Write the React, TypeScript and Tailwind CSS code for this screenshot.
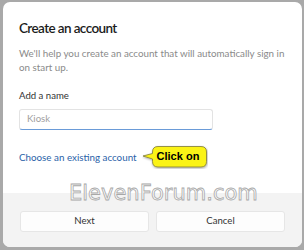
import React from "react";

export default function App() {
  return (
    <div className="w-[304px] h-[250px] bg-[#a9a9a9] pt-[2px] pr-[2px] pb-[3px] pl-[3px] overflow-hidden" style={{ fontFamily: 'Lato, "Open Sans", sans-serif' }}>
      <div className="relative flex h-full flex-col overflow-hidden rounded-[7px] bg-white">
        <div className="flex h-[191px] flex-col px-[16px] pt-[16px]">
          <div className="text-[13.5px] leading-[20px] font-semibold tracking-[-0.6px] text-[#1b1b1b]">Create an account</div>
          <div className="mt-[9px] w-[272px] text-[9.8px] leading-[13.5px] text-[#8a8a8a]">
            We'll help you create an account that will automatically sign in on start up.
          </div>
          <div className="mt-[15px] text-[9.6px] leading-[14px] text-[#333]">Add a name</div>
          <div className="mt-[6px] flex h-[21px] w-[194px] items-center rounded-[3px] border border-[#e3e3e3] border-b-[1.5px] border-b-[#6a9bd8] px-[7px] text-[9.6px] text-[#a0a0a0]">
            Kiosk
          </div>
          <div className="mt-[15px] flex items-center">
            <span className="text-[9.8px] leading-[14px] text-[#2a62a8]">Choose an existing account</span>
            <div className="relative ml-[5px] h-[24px] w-[66px]">
              <svg width="66" height="24" viewBox="0 0 66 24" className="absolute left-0 top-0">
                <defs>
                  <filter id="sh" x="-20%" y="-20%" width="140%" height="160%">
                    <feDropShadow dx="0.5" dy="1" stdDeviation="0.8" floodColor="#000" floodOpacity="0.35" />
                  </filter>
                </defs>
                <path
                  d="M16 1.5 H59 Q64.5 1.5 64.5 7 V16.5 Q64.5 22 59 22 H16 Q10.5 22 10.5 16.5 V14 L1 11 L10.5 8.5 V7 Q10.5 1.5 16 1.5 Z"
                  fill="#fbf315"
                  stroke="#7d7a3a"
                  strokeWidth="0.8"
                  filter="url(#sh)"
                />
              </svg>
              <span className="absolute left-[15px] top-[4px] text-[11px] leading-[14px] font-bold text-black" style={{ fontFamily: '"Liberation Sans", Arial, sans-serif' }}>
                Click on
              </span>
            </div>
          </div>
        </div>
        <div className="flex flex-1 gap-[7px] bg-[#f3f3f3] px-[17px] pt-[18px]">
          <div className="flex h-[21px] w-[129px] items-center justify-center rounded-[3px] border border-[#e6e6e6] bg-[#fdfdfd] text-[9.6px] text-[#333]">Next</div>
          <div className="flex h-[21px] w-[129px] items-center justify-center rounded-[3px] border border-[#e6e6e6] bg-[#fdfdfd] text-[9.6px] text-[#333]">Cancel</div>
        </div>
        <div
          className="pointer-events-none absolute left-[66px] top-[178px] text-[21px] leading-[26px] text-white [-webkit-text-stroke:0.8px_#a8a8a8]"
          style={{ fontFamily: '"DejaVu Sans", Verdana, sans-serif' }}
        >
          ElevenForum.com
        </div>
      </div>
    </div>
  );
}
